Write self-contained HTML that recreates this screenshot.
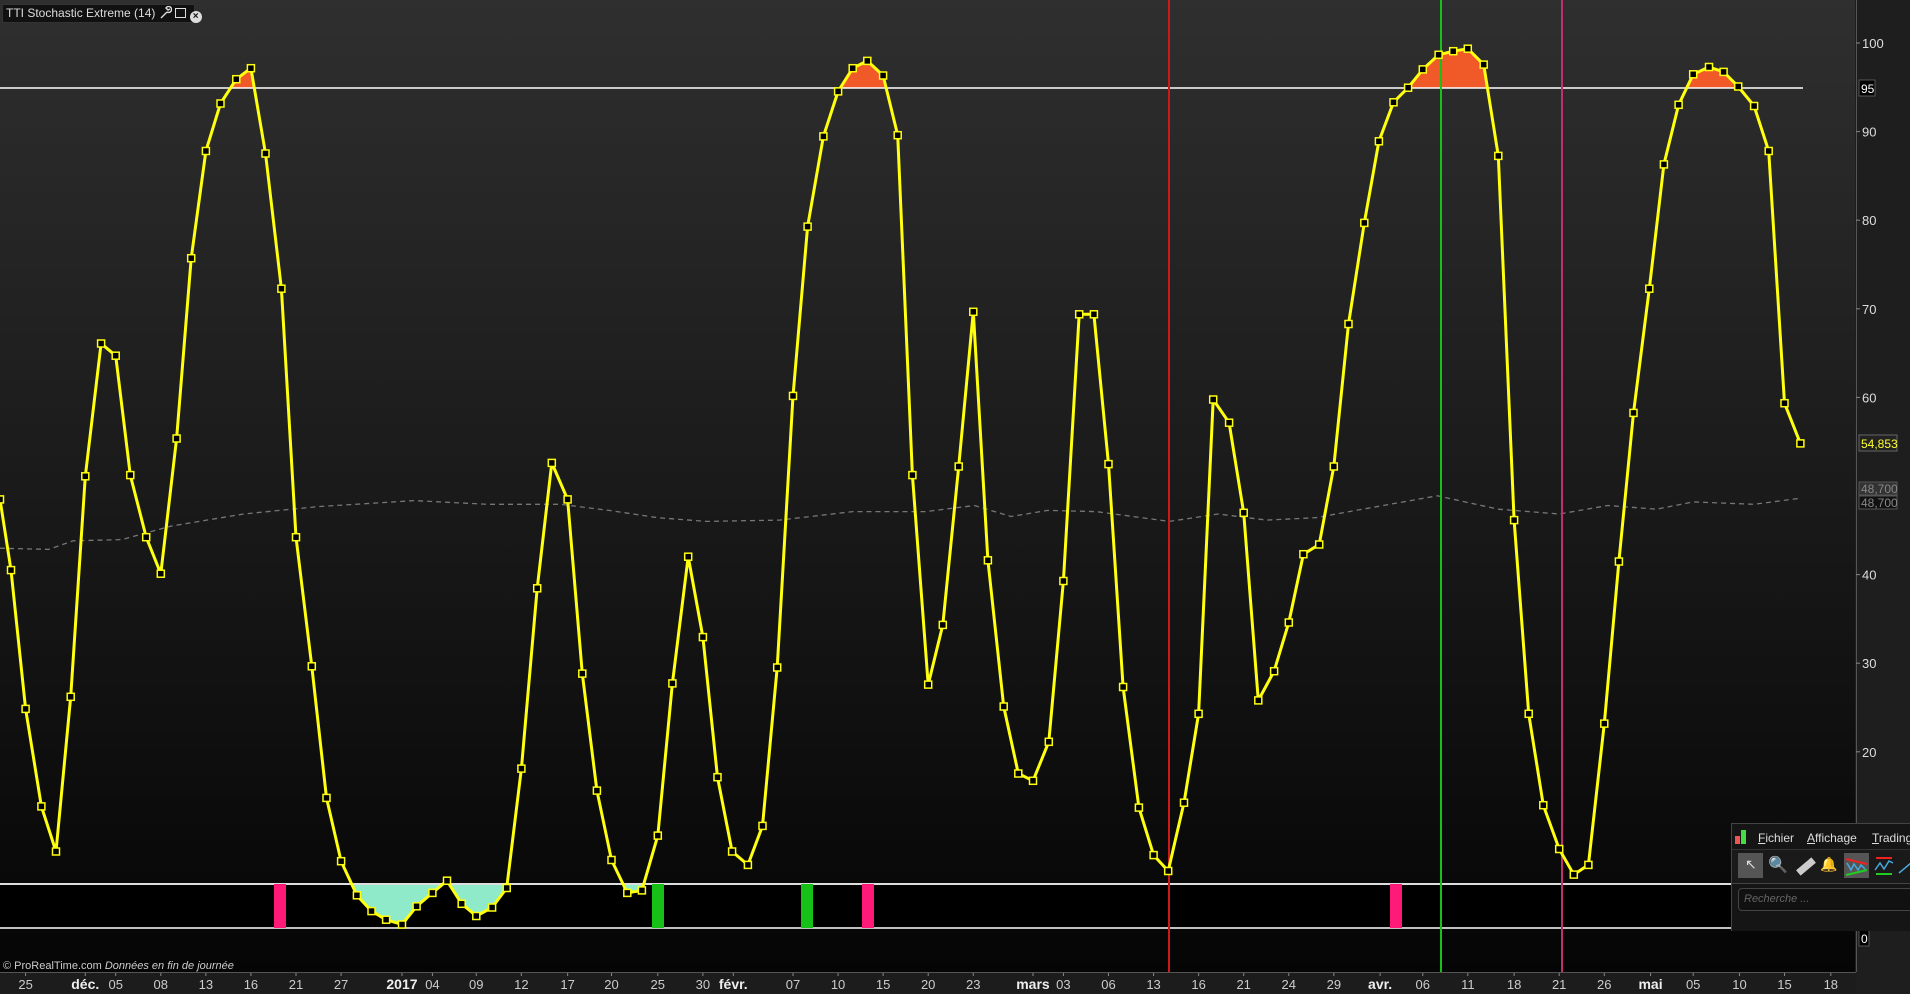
<!DOCTYPE html>
<html><head><meta charset="utf-8"><style>
html,body{margin:0;padding:0;width:1910px;height:994px;overflow:hidden;background:#1e1e1e;font-family:"Liberation Sans",sans-serif}
#c{position:absolute;left:0;top:0}
.panel{position:absolute;left:1731px;top:823px;width:179px;height:107px;background:#151515;border-top:1px solid #444;border-left:1px solid #444}
.menu{position:absolute;top:4px;left:0;height:20px;width:179px;color:#ddd;font-size:12px}
.menu span{position:absolute;top:3px}
.tb{position:absolute;top:25px;left:0;width:179px;height:33px;border-top:1px solid #333;border-bottom:1px solid #444;background:#1a1a1a}
.search{position:absolute;left:6px;top:64px;width:180px;height:21px;border:1px solid #444;border-radius:4px;background:#111;color:#666;font-style:italic;font-size:11px;line-height:21px;padding-left:5px}
.title{position:absolute;left:2px;top:4px;height:17px;width:188px;background:#111;border:1px solid #333;color:#ddd;font-size:12px;line-height:17px;padding-left:3px;white-space:nowrap}
</style></head><body>
<svg id="c" width="1910" height="994" xmlns="http://www.w3.org/2000/svg">
<defs>
<linearGradient id="bg" x1="0" y1="0" x2="0" y2="1"><stop offset="0" stop-color="#2f2f2f"/><stop offset="1" stop-color="#050505"/></linearGradient>
<clipPath id="top"><rect x="0" y="0" width="1856" height="88"/></clipPath>
<clipPath id="bot"><rect x="0" y="884" width="1856" height="60"/></clipPath>
<clipPath id="chart"><rect x="0" y="0" width="1855" height="972"/></clipPath>
</defs>
<rect x="0" y="0" width="1855" height="972" fill="url(#bg)"/>
<rect x="0" y="884" width="1731" height="44" fill="#000"/>
<rect x="1856" y="0" width="54" height="994" fill="#1e1e1e"/>
<line x1="1856.5" y1="0" x2="1856.5" y2="972" stroke="#555"/>
<rect x="0" y="972" width="1856" height="21" fill="#1c1c1c"/>
<line x1="0" y1="972.5" x2="1856" y2="972.5" stroke="#555"/>
<g id="g" clip-path="url(#chart)"></g>
<g id="ax"></g>
</svg>
<div class="title">TTI Stochastic Extreme (14) <svg width="13" height="13" style="vertical-align:-2px"><path d="M2 12L8 6M8 6A3 3 0 1 0 7 2L9 4L11 3" stroke="#ddd" fill="none" stroke-width="1.4"/></svg><span style="display:inline-block;width:9px;height:8px;border:1.5px solid #ddd;margin-left:3px;vertical-align:-1px"></span><span style="display:inline-block;width:12px;height:12px;border-radius:6px;background:#ddd;color:#111;font-size:10px;line-height:12px;text-align:center;margin-left:4px;font-weight:bold;vertical-align:-2px">×</span></div>
<div style="position:absolute;left:3px;top:960px;color:#ccc;font-size:11px">© ProRealTime.com <i>Données en fin de journée</i></div>
<div class="panel">
 <div class="menu">
  <div style="position:absolute;left:3px;top:8px;width:5px;height:8px;background:#e55"></div>
  <div style="position:absolute;left:9px;top:2px;width:5px;height:14px;background:#4d4"></div>
  <span style="left:26px"><u>F</u>ichier</span><span style="left:75px"><u>A</u>ffichage</span><span style="left:140px"><u>T</u>rading</span>
 </div>
 <div class="tb">
  <div style="position:absolute;left:6px;top:3px;width:25px;height:25px;background:#555"></div>
  <span style="position:absolute;left:13px;top:6px;color:#ddd;font-size:14px">↖</span>
  <span style="position:absolute;left:36px;top:5px;color:#ccc;font-size:16px">🔍</span>
  <div style="position:absolute;left:64px;top:13px;width:20px;height:7px;background:#ccc;transform:rotate(-40deg)"></div>
  <span style="position:absolute;left:88px;top:6px;color:#ddd;font-size:14px">🔔</span>
  <div style="position:absolute;left:112px;top:3px;width:25px;height:25px;background:#555"></div>
  <svg style="position:absolute;left:112px;top:3px" width="25" height="25"><path d="M2 6L23 11" stroke="#e22" stroke-width="2"/><path d="M2 22L23 17" stroke="#2c2" stroke-width="2"/><path d="M3 10L7 17L10 11L14 17L17 12L21 16" stroke="#4ad" fill="none" stroke-width="1.5"/></svg>
  <svg style="position:absolute;left:141px;top:5px" width="22" height="22"><path d="M3 3H19" stroke="#e22" stroke-width="2"/><path d="M3 19H19" stroke="#2c2" stroke-width="2"/><path d="M2 15L7 8L11 14L16 6L20 8" stroke="#4ad" fill="none" stroke-width="1.5"/></svg>
  <svg style="position:absolute;left:166px;top:5px" width="13" height="22"><path d="M1 18L13 8" stroke="#4ad" stroke-width="1.5"/></svg>
 </div>
 <div class="search">Recherche ...</div>
</div>
<script>
const s=1910/1568;
const P=[[0,410],[9,468],[21,582],[34,662],[46,699],[58,572],[70,391],[83,282],[95,292],[107,390],[120,441],[132,471],[145,360],[157,212],[169,124],[181,85],[194,65],[206,56],[218,126],[231,237],[243,441],[256,547],[268,655],[280,707],[293,735],[305,748],[317,755],[330,759],[342,744],[355,733],[367,723],[379,742],[391,752],[404,745],[416,729],[428,631],[441,483],[453,380],[466,410],[478,553],[490,649],[502,706],[515,733],[527,731],[540,686],[552,561],[565,457],[577,523],[589,638],[601,699],[614,710],[626,678],[638,548],[651,325],[663,186],[676,112],[688,75],[700,56],[712,50],[725,62],[737,111],[749,390],[762,562],[774,513],[787,383],[799,256],[811,460],[824,580],[836,635],[848,641],[861,609],[873,477],[886,258],[898,258],[910,381],[922,564],[935,663],[947,702],[959,715],[972,659],[984,586],[996,328],[1009,347],[1021,421],[1033,575],[1046,551],[1058,511],[1070,455],[1083,447],[1095,383],[1107,266],[1120,183],[1132,116],[1144,84],[1156,72],[1168,57],[1181,45],[1193,42],[1205,40],[1218,53],[1230,128],[1243,427],[1255,586],[1267,661],[1280,697],[1292,718],[1304,710],[1317,594],[1329,461],[1341,339],[1354,237],[1366,135],[1378,86],[1390,61],[1403,55],[1415,59],[1427,71],[1440,87],[1452,124],[1465,331],[1478,364]].map(p=>[p[0]*s,p[1]*s]);
const D=[[0,450],[40,451],[60,444],[100,443],[140,432],[200,422],[260,416],[340,411],[400,414],[460,414],[500,419],[540,425],[580,428],[640,427],[700,420],[760,420],[800,415],[830,424],[860,419],[900,420],[960,428],[1000,422],[1040,427],[1080,425],[1130,416],[1180,407],[1230,418],[1280,422],[1320,415],[1360,418],[1390,412],[1440,414],[1478,409]].map(p=>[p[0]*s,p[1]*s]);
const pts=a=>a.map(p=>p[0].toFixed(1)+','+p[1].toFixed(1)).join(' ');
let h='';
const first=P[0],last=P[P.length-1];
h+=`<polygon points="${first[0]},88 ${pts(P)} ${last[0]},88" fill="#f05a28" clip-path="url(#top)"/>`;
h+=`<polygon points="${first[0]},884 ${pts(P)} ${last[0]},884" fill="#8eeac8" clip-path="url(#bot)"/>`;
h+=`<polyline points="${pts(D)}" fill="none" stroke="#777" stroke-width="1.3" stroke-dasharray="5,4"/>`;
h+=`<line x1="0" y1="88" x2="1803" y2="88" stroke="#fff" stroke-width="1.5"/>`;
h+=`<line x1="0" y1="884" x2="1731" y2="884" stroke="#ddd" stroke-width="2"/>`;
h+=`<line x1="0" y1="928" x2="1731" y2="928" stroke="#fff" stroke-width="1.5"/>`;
[[274,'#ff1a78'],[652,'#16c016'],[801,'#16c016'],[862,'#ff1a78'],[1390,'#ff1a78']].forEach(b=>h+=`<rect x="${b[0]}" y="884" width="12" height="44" fill="${b[1]}"/>`);
h+=`<line x1="1169" y1="0" x2="1169" y2="972" stroke="#d01818" stroke-width="2"/>`;
h+=`<line x1="1441" y1="0" x2="1441" y2="972" stroke="#18c018" stroke-width="2"/>`;
h+=`<line x1="1562" y1="0" x2="1562" y2="972" stroke="#c03070" stroke-width="2"/>`;
h+=`<polyline points="${pts(P)}" fill="none" stroke="#ffff10" stroke-width="3" stroke-linejoin="round"/>`;
P.forEach(p=>h+=`<rect x="${(p[0]-3.5).toFixed(1)}" y="${(p[1]-3.5).toFixed(1)}" width="7" height="7" fill="#000" stroke="#ffff10" stroke-width="1.5"/>`);
document.getElementById('g').innerHTML=h;
let a='';
const yv=v=>43+(100-v)*8.86;
[100,90,80,70,60,40,30,20].forEach(v=>{const y=yv(v);a+=`<line x1="1856" y1="${y}" x2="1860" y2="${y}" stroke="#888"/><text x="1862" y="${y+5}" fill="#ddd" font-size="13">${v}</text>`});
a+=`<rect x="1859" y="80" width="16" height="16" fill="#000" stroke="#555"/><text x="1861" y="93" fill="#fff" font-size="12">95</text>`;
a+=`<rect x="1859" y="435" width="38" height="16" fill="#222" stroke="#666"/><text x="1861" y="448" fill="#ffff30" font-size="12">54,853</text>`;
a+=`<rect x="1859" y="482" width="38" height="13" fill="#333" stroke="#555"/><text x="1861" y="493" fill="#888" font-size="12">48,700</text>`;
a+=`<rect x="1859" y="496" width="38" height="13" fill="#111" stroke="#555"/><text x="1861" y="507" fill="#888" font-size="12">48,700</text>`;
a+=`<rect x="1859" y="930" width="10" height="16" fill="#000" stroke="#555"/><text x="1861" y="943" fill="#fff" font-size="12">0</text>`;
const L=[['25',21],['déc.',70,1],['05',95],['08',132],['13',169],['16',206],['21',243],['27',280],['2017',330,1],['04',355],['09',391],['12',428],['17',466],['20',502],['25',540],['30',577],['févr.',602,1],['07',651],['10',688],['15',725],['20',762],['23',799],['mars',848,1],['03',873],['06',910],['13',947],['16',984],['21',1021],['24',1058],['29',1095],['avr.',1133,1],['06',1168],['11',1205],['18',1243],['21',1280],['26',1317],['mai',1355,1],['05',1390],['10',1428],['15',1465],['18',1503]];
L.forEach(l=>{const x=l[1]*s;a+=`<line x1="${x}" y1="973" x2="${x}" y2="976" stroke="#888"/><text x="${x}" y="989" fill="${l[2]?'#eee':'#ccc'}" font-size="${l[2]?14:13}" ${l[2]?'font-weight="bold"':''} text-anchor="middle">${l[0]}</text>`});
document.getElementById('ax').innerHTML=a;
</script>
</body></html>
